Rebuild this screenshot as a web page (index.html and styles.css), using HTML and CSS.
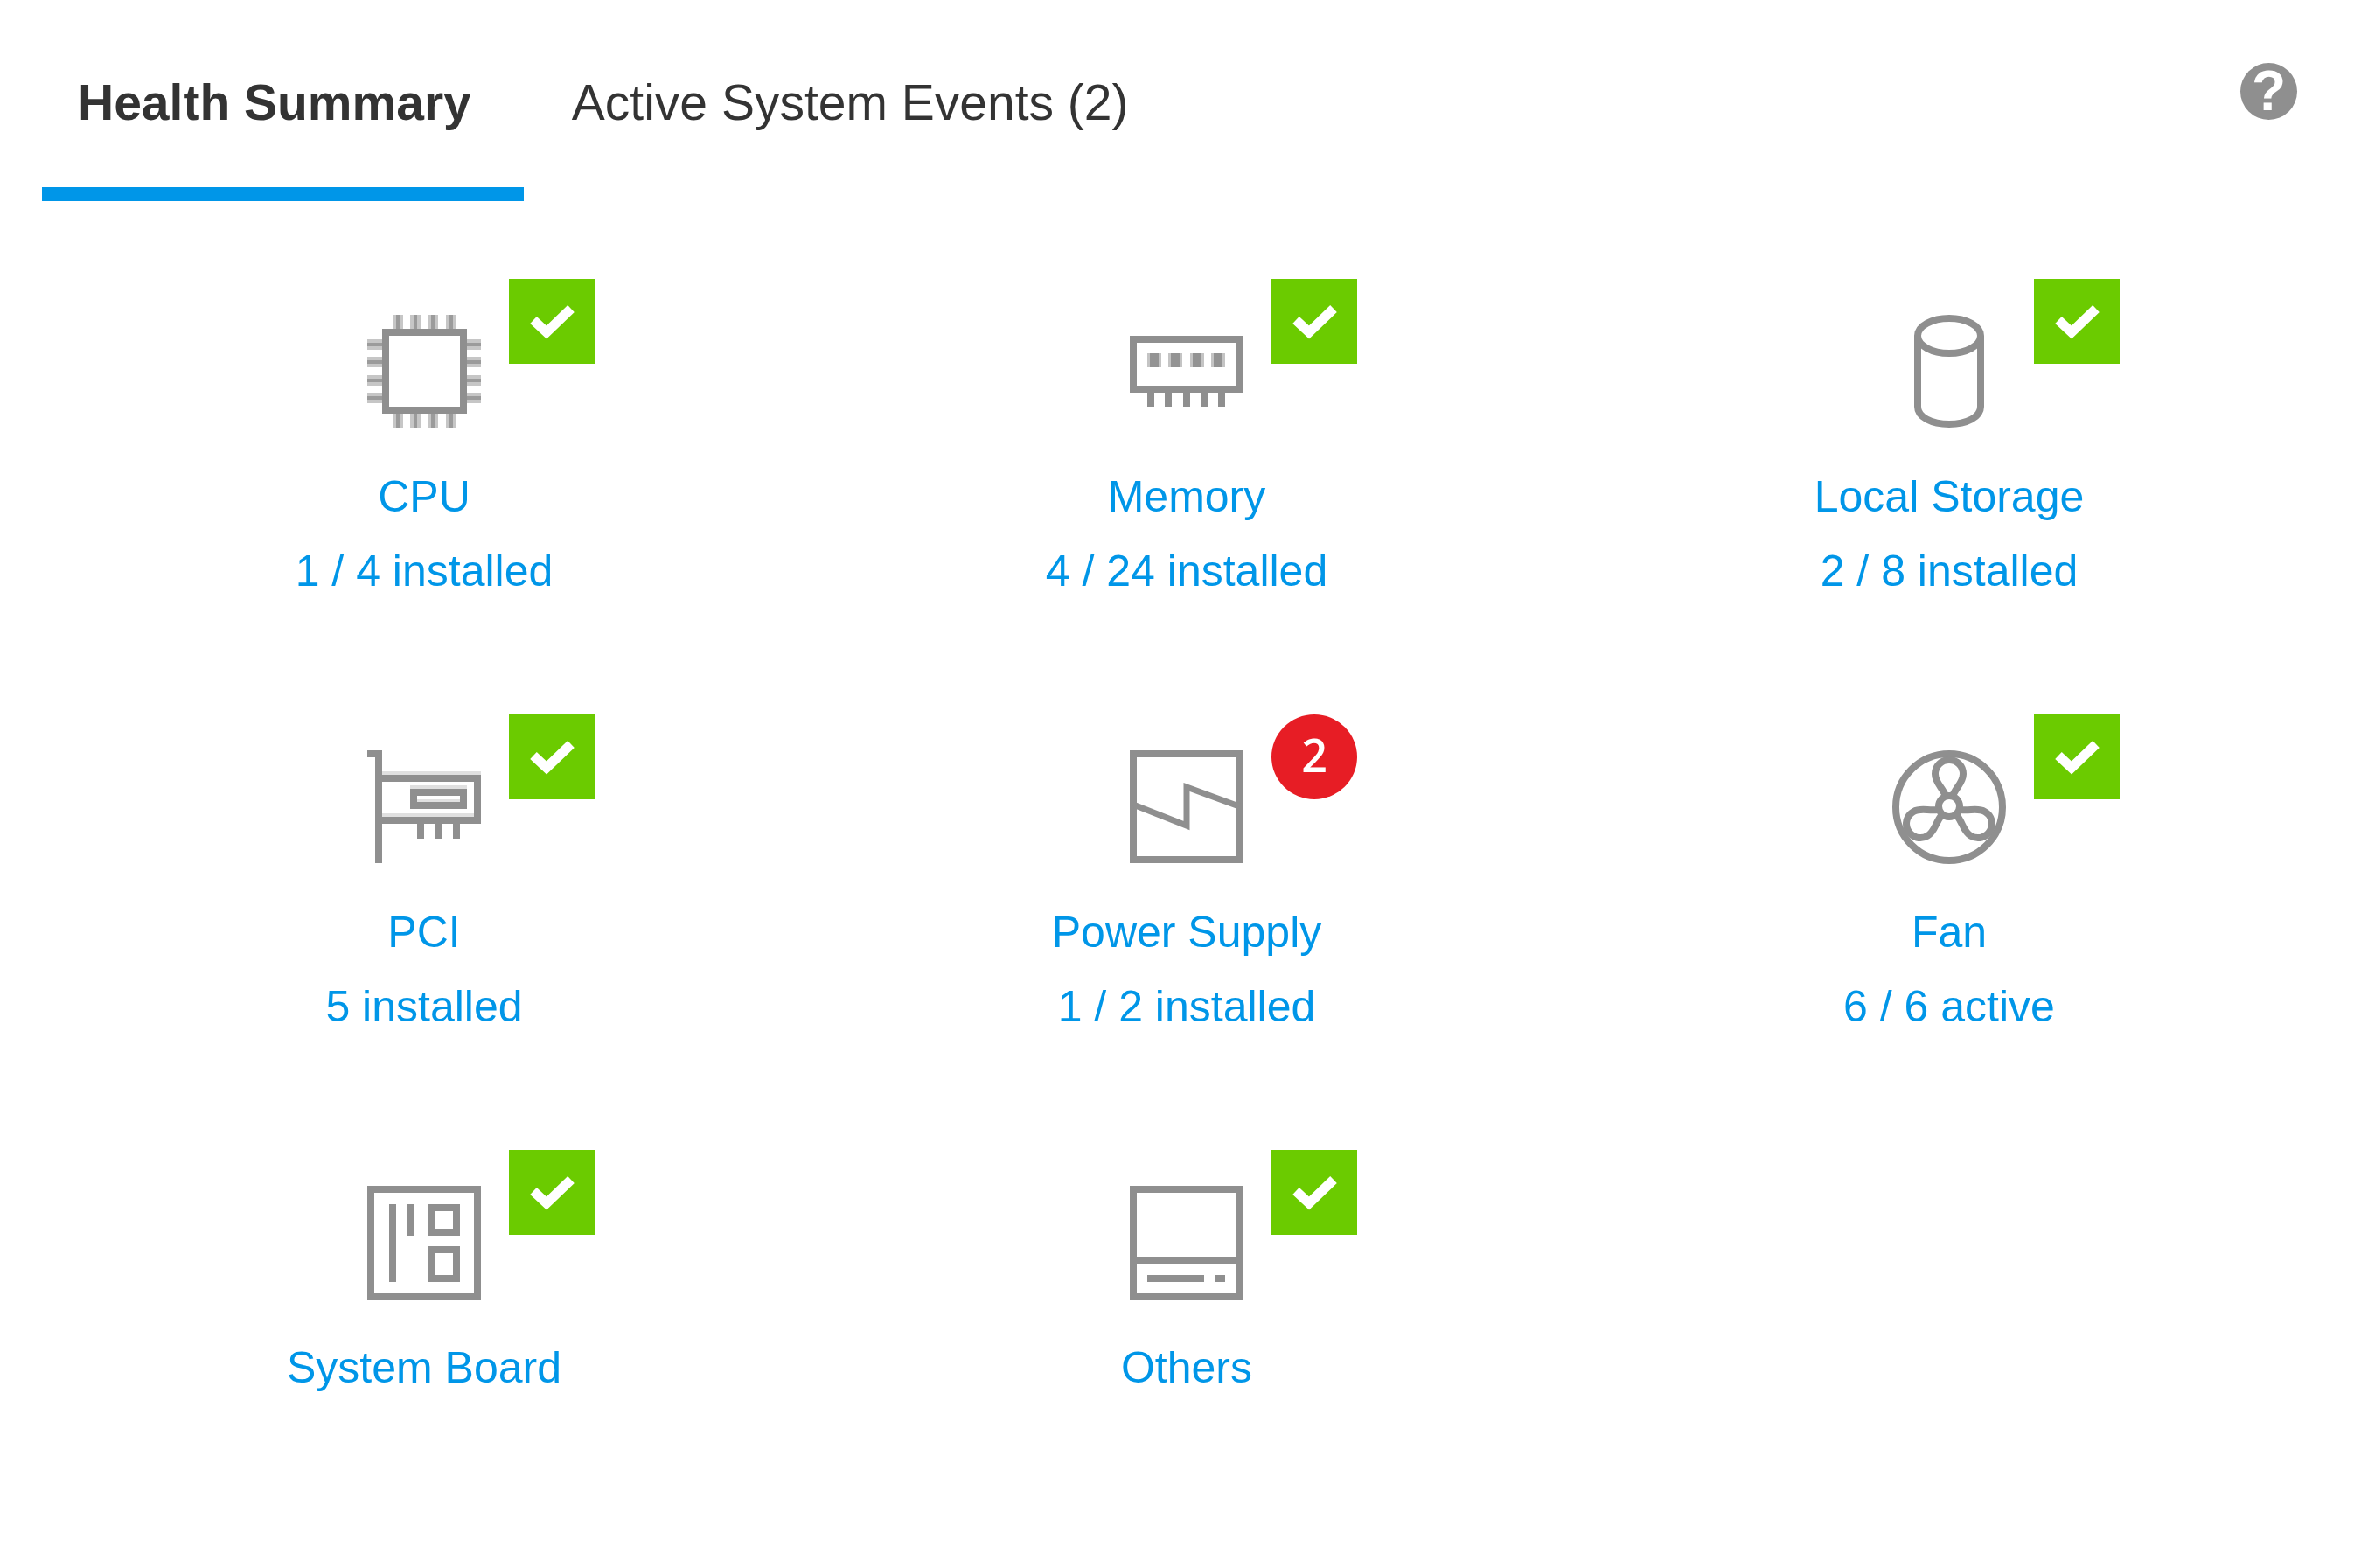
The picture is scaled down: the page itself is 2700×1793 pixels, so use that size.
FILE: index.html
```html
<!DOCTYPE html>
<html lang="en">
  <head>
    <meta charset="UTF-8" />
    <meta name="viewport" content="width=device-width, initial-scale=1.0" />
    <title>Health Summary</title>
    <link rel="stylesheet" href="styles.css">
  </head>
  <body>
    <!-- shared check mark -->
    <svg class="sprite" aria-hidden="true">
      <symbol id="check" viewBox="0 0 98 97">
        <path d="M28 47L43 61L71 34" fill="none" stroke="#fff" stroke-width="11" />
      </symbol>
    </svg>

    <header class="header">
      <nav class="tabs">
        <button class="tab active" type="button">Health Summary</button>
        <button class="tab" type="button">Active System Events (2)</button>
      </nav>
      <button class="help" type="button" aria-label="Help">?</button>
    </header>

    <main class="health-grid">
      <!-- cpu -->
      <a class="item" href="#cpu">
        <span class="item-icon">
          <svg class="icon" viewBox="0 0 130 130">
            <path class="pin-edge" d="M35 0V17M55 0V17M75 0V17M96 0V17M35 113V129M55 113V129M75 113V129M96 113V129M0 34H17M0 54H17M0 75H17M0 95H17M113 34H130M113 54H130M113 75H130M113 95H130" />
            <path class="pin-core" d="M35 0V17M55 0V17M75 0V17M96 0V17M35 113V129M55 113V129M75 113V129M96 113V129M0 34H17M0 54H17M0 75H17M0 95H17M113 34H130M113 54H130M113 75H130M113 95H130" />
            <rect x="21" y="20" width="89" height="89" />
          </svg>
          <span class="badge ok"><svg class="check"><use href="#check" /></svg></span>
        </span>
        <span class="label">CPU</span>
        <span class="label">1 / 4 installed</span>
      </a>

      <!-- memory -->
      <a class="item" href="#memory">
        <span class="item-icon">
          <svg class="icon" viewBox="0 0 130 130">
            <rect x="4" y="28" width="121" height="57" />
            <path class="chip-edge" d="M20 52H36M44 52H60M69 52H85M93 52H109" />
            <path class="chip-core" d="M23 52H33M47 52H57M72 52H82M96 52H106" />
            <path d="M24 85V105M44 85V105M65 85V105M85 85V105M105 85V105" />
          </svg>
          <span class="badge ok"><svg class="check"><use href="#check" /></svg></span>
        </span>
        <span class="label">Memory</span>
        <span class="label">4 / 24 installed</span>
      </a>

      <!-- local storage -->
      <a class="item" href="#storage">
        <span class="item-icon">
          <svg class="icon" viewBox="0 0 130 130">
            <ellipse cx="65" cy="24" rx="36" ry="20" />
            <path d="M29 24V105C29 117 45 125 65 125S101 117 101 105V24" />
          </svg>
          <span class="badge ok"><svg class="check"><use href="#check" /></svg></span>
        </span>
        <span class="label">Local Storage</span>
        <span class="label">2 / 8 installed</span>
      </a>

      <!-- pci -->
      <a class="item" href="#pci">
        <span class="item-icon">
          <svg class="icon" viewBox="0 0 130 130">
            <path class="shade" d="M17 26H130M17 74H122M49 42H114M57 58H106" />
            <path d="M0 4H13V129" />
            <path d="M17 32H126V80H17" />
            <rect x="53" y="48" width="57" height="15" />
            <path d="M61 80V101M81 80V101M102 80V101" />
          </svg>
          <span class="badge ok"><svg class="check"><use href="#check" /></svg></span>
        </span>
        <span class="label">PCI</span>
        <span class="label">5 installed</span>
      </a>

      <!-- power supply -->
      <a class="item" href="#power">
        <span class="item-icon">
          <svg class="icon" viewBox="0 0 130 130">
            <rect x="4" y="4" width="121" height="121" />
            <path class="bolt" d="M4 62L65 86V42L125 64" />
          </svg>
          <span class="badge error">2</span>
        </span>
        <span class="label">Power Supply</span>
        <span class="label">1 / 2 installed</span>
      </a>

      <!-- fan -->
      <a class="item" href="#fan">
        <span class="item-icon">
          <svg class="icon" viewBox="0 0 130 130">
            <circle cx="65" cy="65" r="61" />
            <circle cx="65" cy="64" r="12" />
            <path d="M61 52C57 42 49 37 49 27C49 18 56 11 65 11S81 18 81 27C81 37 73 42 69 52" />
            <path transform="rotate(120 65 65)" d="M61 52C57 42 49 37 49 27C49 18 56 11 65 11S81 18 81 27C81 37 73 42 69 52" />
            <path transform="rotate(240 65 65)" d="M61 52C57 42 49 37 49 27C49 18 56 11 65 11S81 18 81 27C81 37 73 42 69 52" />
          </svg>
          <span class="badge ok"><svg class="check"><use href="#check" /></svg></span>
        </span>
        <span class="label">Fan</span>
        <span class="label">6 / 6 active</span>
      </a>

      <!-- system board -->
      <a class="item" href="#board">
        <span class="item-icon">
          <svg class="icon" viewBox="0 0 130 130">
            <rect x="4" y="4" width="122" height="122" />
            <path d="M29 21V110M49 21V57" />
            <rect x="73" y="25" width="29" height="28" />
            <rect x="73" y="73" width="29" height="33" />
          </svg>
          <span class="badge ok"><svg class="check"><use href="#check" /></svg></span>
        </span>
        <span class="label">System Board</span>
      </a>

      <!-- others -->
      <a class="item" href="#others">
        <span class="item-icon">
          <svg class="icon" viewBox="0 0 130 130">
            <rect x="4" y="4" width="121" height="122" />
            <path d="M4 85H125M20 106H85M97 106H109" />
          </svg>
          <span class="badge ok"><svg class="check"><use href="#check" /></svg></span>
        </span>
        <span class="label">Others</span>
      </a>
    </main>
  </body>
</html>
```
FILE: styles.css
```css
* {
  margin: 0;
  padding: 0;
  box-sizing: border-box;
}

body {
  font-family: "Liberation Sans", Arial, sans-serif;
  background-color: #fff;
  color: #333;
}

.sprite {
  display: none;
}

/* header */
.header {
  display: flex;
  align-items: flex-start;
  justify-content: space-between;
  padding: 0 73px 0 48px;
}

.tabs {
  display: flex;
  gap: 14px;
}

.tab {
  padding: 85px 60px 65px 41px;
  border: none;
  border-bottom: 16px solid transparent;
  background: none;
  color: #333;
  font-family: inherit;
  font-size: 57px;
  line-height: 64px;
  white-space: nowrap;
  cursor: pointer;
}

.tab.active {
  border-bottom-color: #0096e8;
  font-weight: bold;
}

.help {
  width: 65px;
  height: 65px;
  margin-top: 72px;
  border: none;
  border-radius: 50%;
  background-color: #8f8f8f;
  color: #fff;
  font-family: inherit;
  font-size: 64px;
  font-weight: bold;
  line-height: 65px;
  cursor: pointer;
}

/* components */
.health-grid {
  display: grid;
  grid-template-columns: repeat(3, 1fr);
  row-gap: 121px;
  padding: 89px 35px 89px 49px;
}

.item {
  display: flex;
  flex-direction: column;
  align-items: center;
  padding-top: 41px;
  color: #0096e8;
  text-decoration: none;
}

.item-icon {
  position: relative;
  height: 130px;
  margin-bottom: 36px;
}

.icon {
  display: block;
  width: 130px;
  height: 130px;
  fill: none;
  stroke: #8f8f8f;
  stroke-width: 8px;
}

.pin-edge {
  stroke: #c6c6c6;
  stroke-width: 12px;
}

.pin-core {
  stroke: #9b9b9b;
  stroke-width: 4px;
}

.chip-edge {
  stroke: #c4c4c4;
  stroke-width: 16px;
}

.chip-core {
  stroke: #939393;
  stroke-width: 16px;
}

.shade {
  stroke: #e0e0e0;
  stroke-width: 4px;
}

.bolt {
  stroke-width: 7px;
}

.label {
  font-size: 50px;
  line-height: 85px;
}

/* status badge over the top right corner of the icon */
.badge {
  position: absolute;
  top: -41px;
  left: 162px;
  width: 98px;
  height: 97px;
}

.check {
  display: block;
  width: 98px;
  height: 97px;
}

.ok {
  background-color: #6bcb00;
}

.error {
  border-radius: 50%;
  background-color: #e71d25;
  color: #fff;
  font-family: "Open Sans", "Noto Sans", sans-serif;
  font-size: 52px;
  font-weight: 600;
  line-height: 92px;
  text-align: center;
}
```
